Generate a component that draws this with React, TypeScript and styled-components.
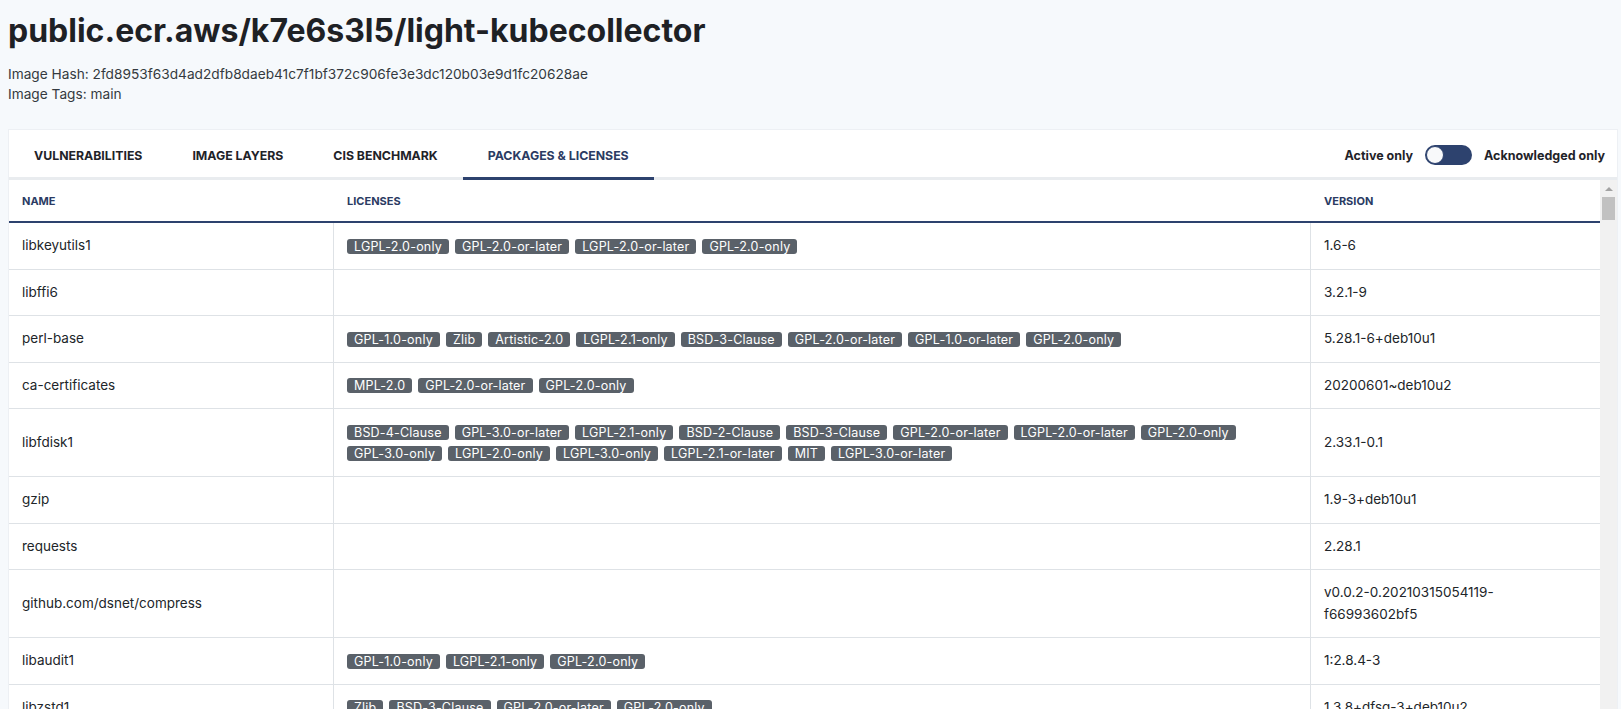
import React from "react";
import styled, { createGlobalStyle } from "styled-components";

const NAVY = "#2d426e";
const LINE = "#dee2e6";

const GlobalStyle = createGlobalStyle`
  html, body { margin: 0; padding: 0; }
  body {
    background: #f6f9fc;
    font-family: Inter, "Noto Sans", "Liberation Sans", sans-serif;
    color: #212529;
  }
  * { box-sizing: border-box; }
`;

const Page = styled.div`
  height: 100vh;
  overflow: hidden;
  display: flex;
  flex-direction: column;
  padding: 0 3px 0 8px;
`;

const Header = styled.header`
  padding-top: 12px;
`;

const Title = styled.h1`
  margin: 0;
  font-size: 32px;
  line-height: 38px;
  font-weight: 700;
  color: #1e2125;
`;

const Meta = styled.div`
  margin-top: 14px;
  font-size: 13.7px;
  line-height: 20px;
  color: #343a40;
`;

const Card = styled.section`
  margin-top: 25px;
  flex: 1;
  min-height: 0;
  display: flex;
  flex-direction: column;
  background: #fff;
  border: 1px solid #edf0f4;
  border-bottom: none;
`;

const TabBar = styled.nav`
  display: flex;
  align-items: stretch;
  height: 50px;
  padding-top: 3px;
  border-bottom: 3px solid #e9ecef;
`;

const Tab = styled.button<{ $active?: boolean }>`
  all: unset;
  display: flex;
  align-items: center;
  padding: 0 25px;
  margin-bottom: -3px;
  border-bottom: 3px solid ${(p) => (p.$active ? NAVY : "transparent")};
  font-size: 12.3px;
  font-weight: 700;
  text-transform: uppercase;
  color: ${(p) => (p.$active ? "#2b3b63" : "#1f2329")};
  cursor: pointer;
`;

const Filters = styled.div`
  margin-left: auto;
  display: flex;
  align-items: center;
  gap: 12px;
  padding-right: 12px;
  font-size: 12.5px;
  font-weight: 700;
  color: #1f2329;
`;

const Switch = styled.button`
  all: unset;
  width: 45px;
  height: 20px;
  border-radius: 10px;
  background: ${NAVY};
  display: flex;
  align-items: center;
  padding: 0 1px;
  cursor: pointer;
`;

const Knob = styled.span`
  width: 18px;
  height: 18px;
  border-radius: 50%;
  background: #f8f9fa;
  border: 1px solid ${NAVY};
`;

const Body = styled.div`
  flex: 1;
  min-height: 0;
  display: flex;
`;

const TableArea = styled.div`
  flex: 1;
  min-width: 0;
  overflow: hidden;
`;

const COLS = "324px 977px 1fr";

const HeadRow = styled.div`
  display: grid;
  grid-template-columns: ${COLS};
  height: 43px;
  border-bottom: 2px solid ${NAVY};
`;

const HeadCell = styled.div<{ $divided?: boolean }>`
  display: flex;
  align-items: center;
  padding: 0 13px;
  border-left: ${(p) => (p.$divided ? "1px solid #fff" : "none")};
  font-size: 11px;
  font-weight: 700;
  text-transform: uppercase;
  color: #2b3b63;
`;

const Row = styled.div`
  display: grid;
  grid-template-columns: ${COLS};
  border-bottom: 1px solid ${LINE};
`;

const Cell = styled.div<{ $divided?: boolean }>`
  display: flex;
  flex-direction: column;
  justify-content: center;
  padding: 12px 13px;
  border-left: ${(p) => (p.$divided ? `1px solid ${LINE}` : "none")};
  font-size: 13.5px;
  line-height: 21.5px;
  color: #212529;
  overflow-wrap: anywhere;
`;

const Badges = styled.div`
  line-height: 21.5px;
`;

const Badge = styled.span`
  display: inline-block;
  vertical-align: middle;
  margin-right: 6px;
  padding: 0 7px;
  border-radius: 3px;
  background: #5a6169;
  color: #fff;
  font-size: 12.5px;
  line-height: 15px;
  letter-spacing: 0.2px;
`;

const Rail = styled.div`
  width: 17px;
  flex: none;
  background: #f1f1f1;
  display: flex;
  flex-direction: column;
`;

const RailArrow = styled.div`
  height: 17px;
  display: flex;
  align-items: center;
  justify-content: center;
  &::before {
    content: "";
    border-left: 4px solid transparent;
    border-right: 4px solid transparent;
    border-bottom: 4px solid #a3a3a3;
  }
`;

const RailThumb = styled.div`
  height: 23px;
  margin: 0 2px;
  background: #c1c1c1;
`;

type Pkg = { name: string; licenses: string[]; version: string };

const packages: Pkg[] = [
  {
    name: "libkeyutils1",
    licenses: ["LGPL-2.0-only", "GPL-2.0-or-later", "LGPL-2.0-or-later", "GPL-2.0-only"],
    version: "1.6-6",
  },
  { name: "libffi6", licenses: [], version: "3.2.1-9" },
  {
    name: "perl-base",
    licenses: [
      "GPL-1.0-only",
      "Zlib",
      "Artistic-2.0",
      "LGPL-2.1-only",
      "BSD-3-Clause",
      "GPL-2.0-or-later",
      "GPL-1.0-or-later",
      "GPL-2.0-only",
    ],
    version: "5.28.1-6+deb10u1",
  },
  {
    name: "ca-certificates",
    licenses: ["MPL-2.0", "GPL-2.0-or-later", "GPL-2.0-only"],
    version: "20200601~deb10u2",
  },
  {
    name: "libfdisk1",
    licenses: [
      "BSD-4-Clause",
      "GPL-3.0-or-later",
      "LGPL-2.1-only",
      "BSD-2-Clause",
      "BSD-3-Clause",
      "GPL-2.0-or-later",
      "LGPL-2.0-or-later",
      "GPL-2.0-only",
      "GPL-3.0-only",
      "LGPL-2.0-only",
      "LGPL-3.0-only",
      "LGPL-2.1-or-later",
      "MIT",
      "LGPL-3.0-or-later",
    ],
    version: "2.33.1-0.1",
  },
  { name: "gzip", licenses: [], version: "1.9-3+deb10u1" },
  { name: "requests", licenses: [], version: "2.28.1" },
  {
    name: "github.com/dsnet/compress",
    licenses: [],
    version: "v0.0.2-0.20210315054119-f66993602bf5",
  },
  {
    name: "libaudit1",
    licenses: ["GPL-1.0-only", "LGPL-2.1-only", "GPL-2.0-only"],
    version: "1:2.8.4-3",
  },
  {
    name: "libzstd1",
    licenses: ["Zlib", "BSD-3-Clause", "GPL-2.0-or-later", "GPL-2.0-only"],
    version: "1.3.8+dfsg-3+deb10u2",
  },
];

const tabs = ["Vulnerabilities", "Image Layers", "CIS Benchmark", "Packages & Licenses"];

export default function App() {
  return (
    <>
      <GlobalStyle />
      <Page>
        <Header>
          <Title>public.ecr.aws/k7e6s3l5/light-kubecollector</Title>
          <Meta>
            <div>Image Hash: 2fd8953f63d4ad2dfb8daeb41c7f1bf372c906fe3e3dc120b03e9d1fc20628ae</div>
            <div>Image Tags: main</div>
          </Meta>
        </Header>
        <Card>
          <TabBar>
            {tabs.map((t, i) => (
              <Tab key={t} $active={i === 3}>
                {t}
              </Tab>
            ))}
            <Filters>
              <span>Active only</span>
              <Switch role="switch" aria-checked={false} aria-label="Toggle filter">
                <Knob />
              </Switch>
              <span>Acknowledged only</span>
            </Filters>
          </TabBar>
          <Body>
            <TableArea>
              <HeadRow>
                <HeadCell>Name</HeadCell>
                <HeadCell $divided>Licenses</HeadCell>
                <HeadCell $divided>Version</HeadCell>
              </HeadRow>
              {packages.map((p) => (
                <Row key={p.name}>
                  <Cell>{p.name}</Cell>
                  <Cell $divided>
                    <Badges>
                      {p.licenses.map((l) => (
                        <Badge key={l}>{l}</Badge>
                      ))}
                    </Badges>
                  </Cell>
                  <Cell $divided>{p.version}</Cell>
                </Row>
              ))}
            </TableArea>
            <Rail aria-hidden>
              <RailArrow />
              <RailThumb />
            </Rail>
          </Body>
        </Card>
      </Page>
    </>
  );
}
